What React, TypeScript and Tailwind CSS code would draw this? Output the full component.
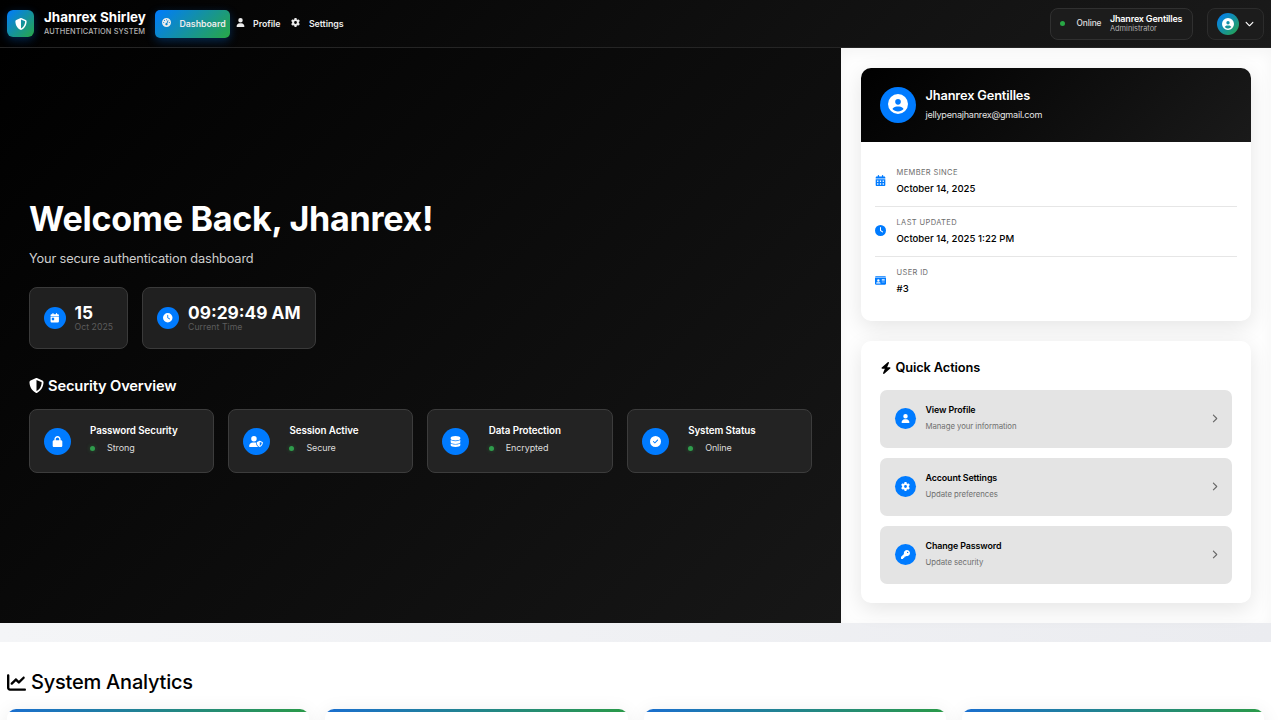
import type { ComponentType, ReactNode } from 'react';
import {
  FaBolt,
  FaCalendarDay,
  FaCalendarDays,
  FaChartLine,
  FaChevronDown,
  FaChevronRight,
  FaCircleCheck,
  FaCircleUser,
  FaClock,
  FaDatabase,
  FaGaugeHigh,
  FaGear,
  FaIdCard,
  FaKey,
  FaLock,
  FaShieldHalved,
  FaUser,
  FaUserShield,
} from 'react-icons/fa6';

type Icon = ComponentType<{ className?: string }>;

function NavItem({ icon: I, label, className }: { icon: Icon; label: string; className: string }) {
  return (
    <a className={`flex h-[28px] items-center text-[8.8px] font-semibold tracking-[-0.03px] text-[#ececec] ${className}`}>
      <I className="mb-[2px] size-[9px] shrink-0" />
      <span className="ml-[8.5px] whitespace-nowrap">{label}</span>
    </a>
  );
}

function Navbar() {
  return (
    <header className="flex h-[48px] items-center border-b border-[#252525] bg-[linear-gradient(135deg,#000,#1a1a1a)] px-[7px] text-white">
      <div className="flex size-[27px] items-center justify-center rounded-[6px] bg-[linear-gradient(135deg,#007bff,#28a745)] shadow-[0_3px_10px_rgba(0,123,255,0.3)]">
        <FaShieldHalved className="size-[12px]" />
      </div>
      <div className="ml-[10px] w-[111px] whitespace-nowrap">
        <div className="text-[13.4px] leading-[15px] font-bold">Jhanrex Shirley</div>
        <div className="mt-[2px] mb-[2px] text-[7.4px] leading-[9px] font-medium tracking-[0.13px] text-[#b3b3b3]">AUTHENTICATION SYSTEM</div>
      </div>
      <nav className="flex items-center">
        <NavItem icon={FaGaugeHigh} label="Dashboard" className="w-[75px] rounded-[5px] bg-[linear-gradient(135deg,#007bff,#28a745)] pl-[7px] shadow-[0_3px_10px_rgba(0,123,255,0.3)]" />
        <NavItem icon={FaUser} label="Profile" className="ml-[5.5px]" />
        <NavItem icon={FaGear} label="Settings" className="ml-[11px]" />
      </nav>
      <div className="ml-auto flex">
        <div className="flex h-[32px] w-[143px] items-center rounded-[8px] border border-[#303030] bg-[#1c1c1c] pl-[9px]">
          <span className="size-[5px] rounded-full bg-[#28a745]" />
          <span className="ml-[11.5px] w-[33.5px] text-[8.3px] font-medium tracking-[-0.1px] text-[#e0e0e0]">Online</span>
          <div className="mb-px whitespace-nowrap">
            <div className="text-[9px] leading-[11px] font-semibold tracking-[-0.18px]">Jhanrex Gentilles</div>
            <div className="text-[7.4px] leading-[10px] text-[#b3b3b3]">Administrator</div>
          </div>
        </div>
        <div className="ml-[14px] flex h-[32px] w-[57px] items-center rounded-[8px] border border-[#2c2c2c] bg-[#1c1c1c] pl-[9px]">
          <span className="flex size-[22px] items-center justify-center rounded-full bg-[linear-gradient(135deg,#007bff,#28a745)]">
            <FaCircleUser className="size-[12px]" />
          </span>
          <FaChevronDown className="ml-[6px] size-[9px]" />
        </div>
      </div>
    </header>
  );
}

function StatCard({ icon: I, value, label, className }: { icon: Icon; value: string; label: string; className: string }) {
  return (
    <div className={`flex h-[62px] items-center rounded-[8px] border border-[#3a3a3a] bg-[#202020] pl-[14px] ${className}`}>
      <span className="flex size-[22px] shrink-0 items-center justify-center rounded-full bg-[#007bff]">
        <I className="size-[9.5px]" />
      </span>
      <div className="ml-[9px] whitespace-nowrap">
        <div className="text-[17.3px] leading-[19px] font-bold">{value}</div>
        <div className="text-[8.7px] leading-[11px] tracking-[0.05px] text-[#5c5c5c]">{label}</div>
      </div>
    </div>
  );
}

const security: { icon: Icon; title: string; status: string; size: string }[] = [
  { icon: FaLock, title: 'Password Security', status: 'Strong', size: 'size-[11px]' },
  { icon: FaUserShield, title: 'Session Active', status: 'Secure', size: 'h-[11px] w-[14px]' },
  { icon: FaDatabase, title: 'Data Protection', status: 'Encrypted', size: 'size-[11px]' },
  { icon: FaCircleCheck, title: 'System Status', status: 'Online', size: 'size-[11px]' },
];

function Hero() {
  return (
    <section className="h-[575px] w-[840.5px] shrink-0 bg-[linear-gradient(135deg,#000,#171717)] pt-[148px] pr-[28.5px] pl-[28.5px] text-white">
      <h1 className="ml-[0.5px] text-[34.1px] leading-[46px] font-bold tracking-[-0.27px] whitespace-nowrap">Welcome Back, Jhanrex!</h1>
      <p className="mt-[7px] ml-[0.5px] text-[12.8px] leading-[20px] tracking-[-0.16px] text-[#cccccc]">Your secure authentication dashboard</p>
      <div className="mt-[18px] flex gap-[14px]">
        <StatCard icon={FaCalendarDay} value="15" label="Oct 2025" className="w-[99.5px]" />
        <StatCard icon={FaClock} value="09:29:49 AM" label="Current Time" className="w-[173.5px]" />
      </div>
      <h2 className="mt-[27px] ml-[0.5px] flex h-[20px] items-center text-[14.7px] font-semibold tracking-[-0.16px]">
        <FaShieldHalved className="mr-[4px] mb-px size-[15px]" />
        Security Overview
      </h2>
      <div className="mt-[13px] grid grid-cols-4 gap-[14px]">
        {security.map(({ icon: I, title, status, size }) => (
          <div key={title} className="flex h-[64px] items-center rounded-[8px] border border-[#3c3c3c] bg-[#232323] pl-[14px]">
            <span className="flex size-[27px] shrink-0 items-center justify-center rounded-full bg-[#007bff]">
              <I className={size} />
            </span>
            <div className="mb-[3px] ml-[19.5px] whitespace-nowrap">
              <div className="text-[9.8px] leading-[14px] font-semibold tracking-[-0.07px]">{title}</div>
              <div className="mt-[3px] flex h-[14px] items-center text-[9px] tracking-[-0.1px] text-[#dcdcdc]">
                <span className="mr-[12px] size-[5px] rounded-full bg-[#2f9c4c] shadow-[0_0_4px_rgba(40,167,69,0.4)]" />
                {status}
              </div>
            </div>
          </div>
        ))}
      </div>
    </section>
  );
}

function InfoRow({ icon: I, label, value, last }: { icon: Icon; label: string; value: string; last?: boolean }) {
  return (
    <div className={`flex h-[50px] items-center ${last ? 'pb-px' : 'border-b border-[#e6e6e6]'}`}>
      <span className="mb-[2px] w-[22px]">
        <I className="h-[11px] w-auto text-[#007bff]" />
      </span>
      <div>
        <div className="text-[7.5px] leading-[10px] tracking-[0.37px] text-[#6c6c6c]">{label}</div>
        <div className="mt-[4px] mb-px text-[9.6px] leading-[13px] font-medium text-black">{value}</div>
      </div>
    </div>
  );
}

function Action({ icon: I, title, text }: { icon: Icon; title: string; text: string }) {
  return (
    <div className="flex h-[58px] items-center rounded-[7px] bg-[#e4e4e4] pr-[13px] pb-px pl-[15px]">
      <span className="flex size-[21px] items-center justify-center rounded-full bg-[#007bff] text-white">
        <I className="mb-px size-[9px]" />
      </span>
      <div className="mb-px ml-[10px] flex-1">
        <div className="text-[8.9px] leading-[12px] font-semibold tracking-[-0.12px] text-black">{title}</div>
        <div className="mt-[5px] text-[7.8px] leading-[11px] tracking-[-0.06px] text-[#707070]">{text}</div>
      </div>
      <FaChevronRight className="size-[9px] text-[#666]" />
    </div>
  );
}

function Card({ className, children }: { className: string; children: ReactNode }) {
  return <div className={`overflow-hidden rounded-[10px] bg-white shadow-[0_6px_22px_rgba(0,0,0,0.1)] ${className}`}>{children}</div>;
}

function Sidebar() {
  return (
    <aside className="w-[430.5px] bg-[#fefefe] px-[20px] pt-[20px] shadow-[inset_0_5px_14px_rgba(0,0,0,0.04)]">
      <Card className="h-[253px]">
        <div className="flex h-[74px] items-center bg-[linear-gradient(135deg,#000,#1a1a1a)] pl-[19px] text-white">
          <span className="flex size-[36px] items-center justify-center rounded-full bg-[#007bff]">
            <FaCircleUser className="mb-[2px] size-[20px]" />
          </span>
          <div className="mb-[2px] ml-[10px]">
            <div className="text-[12.8px] leading-[17px] font-semibold tracking-[-0.15px]">Jhanrex Gentilles</div>
            <div className="mt-[4px] text-[9.1px] leading-[13px] tracking-[-0.24px] text-[#e4e4e4]">jellypenajhanrex@gmail.com</div>
          </div>
        </div>
        <div className="px-[14px] pt-[15px]">
          <InfoRow icon={FaCalendarDays} label="MEMBER SINCE" value="October 14, 2025" />
          <InfoRow icon={FaClock} label="LAST UPDATED" value="October 14, 2025 1:22 PM" />
          <InfoRow icon={FaIdCard} label="USER ID" value="#3" last />
        </div>
      </Card>
      <Card className="mt-[20px] h-[262px] px-[19px] pt-[17px]">
        <h3 className="flex h-[20px] items-center text-[12.8px] font-semibold tracking-[-0.12px] text-black">
          <FaBolt className="mr-[4px] size-[12px]" />
          Quick Actions
        </h3>
        <div className="mt-[12px] flex flex-col gap-[10px]">
          <Action icon={FaUser} title="View Profile" text="Manage your information" />
          <Action icon={FaGear} title="Account Settings" text="Update preferences" />
          <Action icon={FaKey} title="Change Password" text="Update security" />
        </div>
      </Card>
    </aside>
  );
}

export default function App() {
  return (
    <div className="h-[720px] w-[1280px] overflow-hidden bg-white font-['Inter',sans-serif]">
      <div className="w-[1271px]">
        <Navbar />
        <main className="flex h-[575px]">
          <Hero />
          <Sidebar />
        </main>
        <div className="h-[19px] bg-[linear-gradient(90deg,#f4f5f7,#ebecf0)]" />
        <section className="bg-white px-[7px] pt-[26px]">
          <h2 className="flex h-[28px] items-center text-[20px] font-medium tracking-[-0.22px] text-black">
            <FaChartLine className="mr-[5px] size-[19px]" />
            System Analytics
          </h2>
          <div className="mt-[13px] grid grid-cols-4 gap-[16px]">
            {[0, 1, 2, 3].map((i) => (
              <div key={i} className="h-[60px] overflow-hidden rounded-[9px] bg-white shadow-[0_3px_20px_rgba(0,0,0,0.08)]">
                <div className="h-[3px] bg-[linear-gradient(90deg,#1a6fd0,#2a9a48)]" />
              </div>
            ))}
          </div>
        </section>
      </div>
    </div>
  );
}
